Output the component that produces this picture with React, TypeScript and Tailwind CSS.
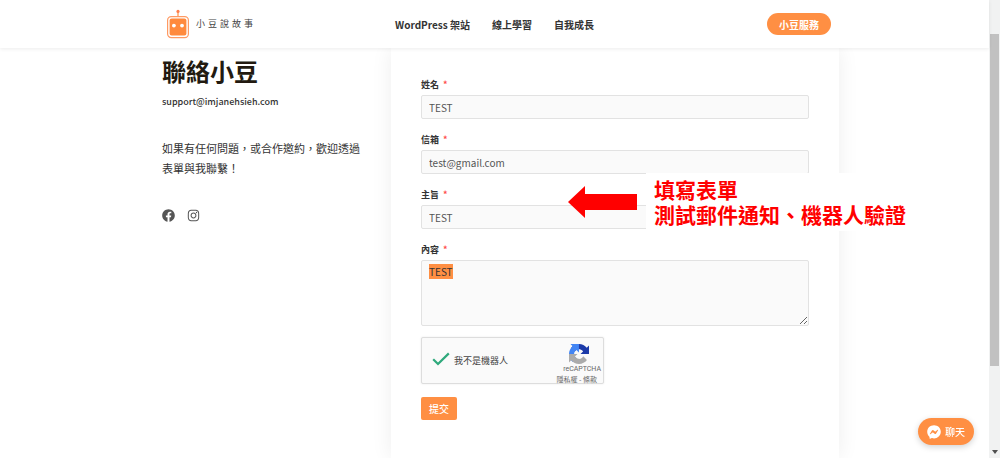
import { useEffect, useRef } from "react";
import { FaFacebook, FaFacebookMessenger, FaInstagram } from "react-icons/fa";

const navLinks = ["WordPress 架站", "線上學習", "自我成長"];
const brand = ["小", "豆", "說", "故", "事"];

const RobotLogo = () => (
  <svg viewBox="0 0 24 30" className="h-[30px] w-6" aria-hidden="true">
    <path d="M12 2v6" stroke="#ff8f43" strokeWidth="1.2" />
    <circle cx="12" cy="2.4" r="1.6" fill="#ff7f4d" />
    <rect x="1.6" y="7.6" width="20.8" height="21" rx="3.6" fill="#fff" stroke="#ff9a63" strokeWidth="1.2" />
    <rect x="3.6" y="9.6" width="16.8" height="17" rx="2" fill="#ff8a3d" />
    <circle cx="7.9" cy="16.6" r="1.9" fill="#fff" />
    <circle cx="16" cy="16.6" r="1.9" fill="#fff" />
  </svg>
);

const RecaptchaLogo = () => (
  <svg viewBox="0 0 64 64" className="size-5" aria-hidden="true">
    <path
      fill="#1c3aa9"
      d="M64 31.955l-.033-1.37V4.687l-7.16 7.16C50.948 4.674 42.033.093 32.05.093c-10.4 0-19.622 4.96-25.458 12.64l11.736 11.86a15.55 15.55 0 0 1 4.754-5.334c2.05-1.6 4.952-2.906 8.968-2.906.485 0 .86.057 1.135.163 4.976.393 9.288 3.14 11.828 7.124l-8.307 8.307L64 31.953"
    />
    <path
      fill="#4285f4"
      d="M31.862.094l-1.37.033H4.594l7.16 7.16C4.58 13.147 0 22.06 0 32.046c0 10.4 4.96 19.622 12.64 25.458L24.5 45.768a15.55 15.55 0 0 1-5.334-4.754c-1.6-2.05-2.906-4.952-2.906-8.968 0-.485.057-.86.163-1.135.393-4.976 3.14-9.288 7.124-11.828l8.307 8.307L31.86.095"
    />
    <path
      fill="#ababab"
      d="M.001 32.045l.033 1.37v25.898l7.16-7.16c5.86 7.173 14.774 11.754 24.76 11.754 10.4 0 19.622-4.96 25.458-12.64l-11.736-11.86a15.55 15.55 0 0 1-4.754 5.334c-2.05 1.6-4.952 2.906-8.968 2.906-.485 0-.86-.057-1.135-.163-4.976-.393-9.288-3.14-11.828-7.124l8.307-8.307c-10.522.04-22.4.066-27.295-.005"
    />
  </svg>
);

const Label = ({ htmlFor, text }: { htmlFor: string; text: string }) => (
  <label htmlFor={htmlFor} className="mb-[3px] flex gap-1 text-[9px] leading-[14px] font-bold text-[#333]">
    {text}
    <span className="text-[#ff4d4d]">*</span>
  </label>
);

const Field = ({ id, label, type = "text", value }: { id: string; label: string; type?: string; value: string }) => (
  <div className="mb-3.5">
    <Label htmlFor={id} text={label} />
    <input
      id={id}
      type={type}
      defaultValue={value}
      className="block h-6 w-full rounded-[2px] border border-[#e2e2e2] bg-[#fafafa] px-[7px] text-[10px] text-[#555] outline-none"
    />
  </div>
);

const Header = () => (
  <header className="relative z-10 bg-white shadow-[0_1px_4px_rgba(0,0,0,0.08)]">
    <div className="mx-auto grid h-12 max-w-[689px] grid-cols-[1fr_auto_1fr] items-center px-2">
      <a href="#" className="flex items-center gap-1.5 pl-2">
        <RobotLogo />
        <span className="flex gap-[3px] text-[9px] text-[#444]">
          {brand.map((char) => (
            <span key={char}>{char}</span>
          ))}
        </span>
      </a>
      <nav className="flex gap-[22px] text-[10px] font-bold text-[#333]">
        {navLinks.map((link) => (
          <a key={link} href="#">
            {link}
          </a>
        ))}
      </nav>
      <a
        href="#"
        className="flex h-[22px] items-center justify-self-end rounded-full bg-[#ff8f43] px-3 text-[10px] font-bold text-white"
      >
        小豆服務
      </a>
    </div>
  </header>
);

const Intro = () => (
  <section className="w-[241px] shrink-0 pt-2 pl-3 text-[#333]">
    <h1 className="text-2xl leading-[30px] font-bold text-[#221a10]">聯絡小豆</h1>
    <a href="mailto:support@imjanehsieh.com" className="mt-2 block text-[9px] leading-4 font-medium">
      support@imjanehsieh.com
    </a>
    <p className="mt-7 w-[200px] text-[11px] leading-5">如果有任何問題，或合作邀約，歡迎透過表單與我聯繫！</p>
    <div className="mt-[31px] flex gap-3 text-[13px] text-[#555]">
      <a href="#" aria-label="Facebook">
        <FaFacebook />
      </a>
      <a href="#" aria-label="Instagram">
        <FaInstagram />
      </a>
    </div>
  </section>
);

const Captcha = () => (
  <div className="mt-[11px] flex h-[47px] w-[183px] items-center justify-between rounded-[2px] border border-[#ddd] bg-[#fafafa] pl-2.5 shadow-[0_0_2px_rgba(0,0,0,0.1)]">
    <label className="flex items-center gap-1 text-[9px] text-[#444]">
      <input type="checkbox" defaultChecked className="peer sr-only" />
      <svg viewBox="0 0 18 14" className="mb-1 h-3.5 w-[18px]" fill="none" aria-hidden="true">
        <path d="M1.2 7.2 6 12 16.8 1.4" stroke="#2fa97c" strokeWidth="2.2" />
      </svg>
      我不是機器人
    </label>
    <div className="flex flex-col items-end pt-1.5 pr-[2px] text-[#666]">
      <div className="pr-3">
        <RecaptchaLogo />
      </div>
      <span className="font-[Roboto,sans-serif] text-[7px] leading-[10px]">reCAPTCHA</span>
      <span className="pr-1 text-[7px] leading-[10px]">
        <a href="#">隱私權</a> - <a href="#">條款</a>
      </span>
    </div>
  </div>
);

const Callout = () => (
  <div className="absolute -top-[15px] left-[147px] flex items-center gap-[9px]">
    <svg viewBox="0 0 69 32" className="h-8 w-[69px]" aria-hidden="true">
      <path d="M0 16 17 0v8h52v16H17v8z" fill="#f00" />
    </svg>
    <p className="bg-white py-1 pr-1.5 pl-2 text-[21px] leading-[25px] font-bold whitespace-nowrap text-[#f00]">
      填寫表單
      <br />
      測試郵件通知、機器人驗證
    </p>
  </div>
);

const ContactForm = () => {
  const messageRef = useRef<HTMLTextAreaElement>(null);

  useEffect(() => {
    messageRef.current?.focus();
    messageRef.current?.select();
  }, []);

  return (
    <form className="min-w-0 flex-1 bg-white px-[30px] pt-[30px] pb-8 shadow-[0_0_20px_rgba(0,0,0,0.07)]">
      <Field id="name" label="姓名" value="TEST" />
      <Field id="email" label="信箱" type="email" value="test@gmail.com" />
      <div className="relative">
        <Field id="subject" label="主旨" value="TEST" />
        <Callout />
      </div>
      <Label htmlFor="message" text="內容" />
      <textarea
        id="message"
        ref={messageRef}
        defaultValue="TEST"
        className="block h-[66px] w-full rounded-[2px] border border-[#e2e2e2] bg-[#fafafa] px-[7px] py-[3px] text-[10px] leading-[15px] text-[#333] outline-none selection:bg-[#ff8f43] selection:text-[#333]"
      />
      <Captcha />
      <button type="submit" className="mt-[13px] h-[23px] rounded-[2px] bg-[#ff8f43] px-2 text-[10px] font-medium text-white">
        提交
      </button>
    </form>
  );
};

const Scrollbar = () => (
  <div className="sticky top-0 flex h-screen w-[11px] shrink-0 flex-col items-center bg-[#f1f2f2] pt-[34px] pb-1">
    <div className="h-[79%] w-[9px] bg-[#c1c1c1]" />
    <svg viewBox="0 0 6 4" className="mt-auto h-1 w-1.5" aria-hidden="true">
      <path d="M0 0h6L3 4z" fill="#505050" />
    </svg>
  </div>
);

const App = () => {
  return (
    <div className="flex min-h-screen bg-white font-['Noto_Sans_CJK_TC',sans-serif]" lang="zh-Hant">
      <div className="flex min-w-0 flex-1 flex-col">
        <Header />
        <main className="mx-auto flex w-full max-w-[689px] flex-1">
          <Intro />
          <ContactForm />
        </main>
      </div>
      <Scrollbar />
      <button
        type="button"
        className="fixed right-[26px] bottom-[13px] flex h-[27px] items-center gap-1 rounded-full bg-[#ff8f43] px-[9px] text-[10px] font-medium text-white shadow-[0_2px_6px_rgba(0,0,0,0.18)]"
      >
        <FaFacebookMessenger className="size-3.5" />
        聊天
      </button>
    </div>
  );
};

export default App;
